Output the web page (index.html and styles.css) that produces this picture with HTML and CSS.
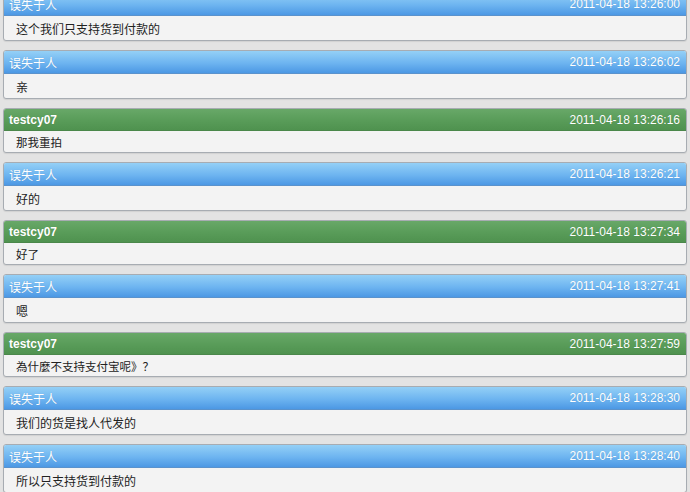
FILE: index.html
```html
<!DOCTYPE html>
<html lang="zh">
<head>
<meta charset="utf-8">
<title>聊天记录</title>
<link rel="stylesheet" href="styles.css">
</head>
<body>
<div class="list">
  <div class="msg blue"><div class="head"><span class="name">误失于人</span><span class="time">2011-04-18 13:26:00</span></div><div class="body">这个我们只支持货到付款的</div></div>
  <div class="msg blue"><div class="head"><span class="name">误失于人</span><span class="time">2011-04-18 13:26:02</span></div><div class="body">亲</div></div>
  <div class="msg green"><div class="head"><span class="name">testcy07</span><span class="time">2011-04-18 13:26:16</span></div><div class="body">那我重拍</div></div>
  <div class="msg blue"><div class="head"><span class="name">误失于人</span><span class="time">2011-04-18 13:26:21</span></div><div class="body">好的</div></div>
  <div class="msg green"><div class="head"><span class="name">testcy07</span><span class="time">2011-04-18 13:27:34</span></div><div class="body">好了</div></div>
  <div class="msg blue"><div class="head"><span class="name">误失于人</span><span class="time">2011-04-18 13:27:41</span></div><div class="body">嗯</div></div>
  <div class="msg green"><div class="head"><span class="name">testcy07</span><span class="time">2011-04-18 13:27:59</span></div><div class="body">為什麼不支持支付宝呢》？</div></div>
  <div class="msg blue"><div class="head"><span class="name">误失于人</span><span class="time">2011-04-18 13:28:30</span></div><div class="body">我们的货是找人代发的</div></div>
  <div class="msg blue"><div class="head"><span class="name">误失于人</span><span class="time">2011-04-18 13:28:40</span></div><div class="body">所以只支持货到付款的</div></div>
</div>
</body>
</html>
```
FILE: styles.css
```css
html, body {
  margin: 0;
  padding: 0;
  background: #e3e3e3;
  overflow: hidden;
  height: 492px;
}
body {
  font-family: "Liberation Sans", "Noto Sans CJK SC", sans-serif;
  font-size: 12px;
}
.list {
  display: flex;
  flex-direction: column;
  gap: 9px;
  padding: 0 3px;
  margin-top: -8px;
}
.msg {
  border: 1px solid #a7acb2;
  border-radius: 3px;
  background: #f3f3f3;
  overflow: hidden;
  box-shadow: 0 1px 1px rgba(0,0,0,0.08);
}
.head {
  display: flex;
  justify-content: space-between;
  align-items: center;
  padding: 0 6px 0 5px;
  color: #fff;
  text-shadow: 0 0 1px rgba(0,0,0,0.15);
}
.blue .head {
  height: 22px;
  background: linear-gradient(#94d0f6, #6db4f0 55%, #4c98e4);
  border-bottom: 1px solid #5a92cc;
}
.green .head {
  height: 21px;
  background: linear-gradient(#68a868, #5a9d5a 50%, #4f924f);
  border-bottom: 1px solid #4a874a;
}
.green .name {
  font-weight: bold;
  font-size: 12px;
}
.time {
  font-size: 12px;
}
.body {
  color: #222;
  padding-left: 12px;
  display: flex;
  align-items: center;
}
.blue .body {
  height: 24px;
}
.green .body {
  height: 21px;
  font-size: 11.5px;
}
```
